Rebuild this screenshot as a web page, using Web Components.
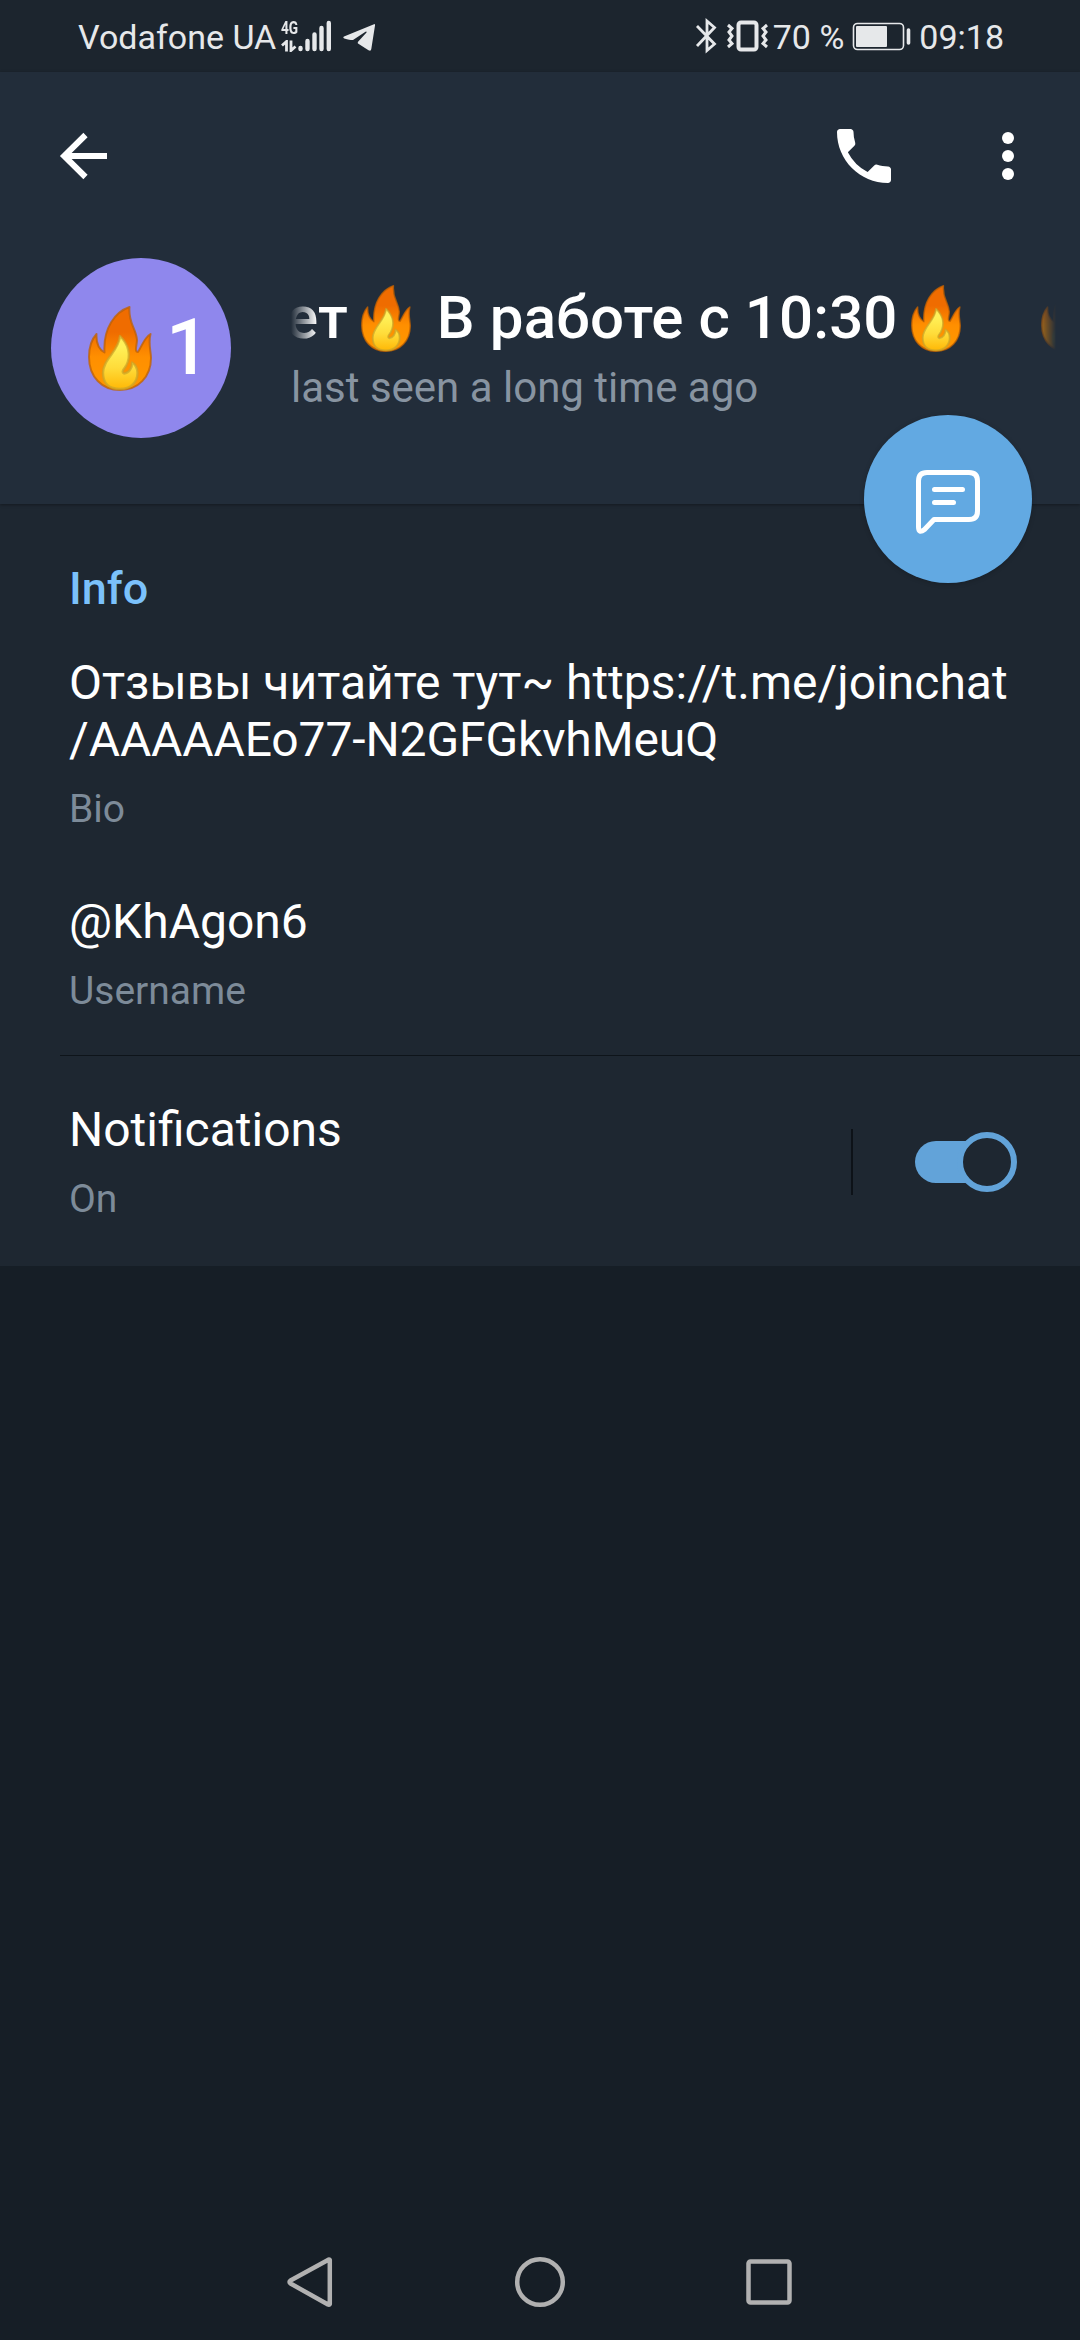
<!DOCTYPE html>
<html lang="en">
<head>
<meta charset="UTF-8">
<title>Profile</title>
<style>
  body {
    margin: 0;
    background: #161e26;
    font-family: Roboto, "Noto Sans", sans-serif;
    color: #fff;
  }
</style>
</head>
<body>
<profile-screen></profile-screen>

<script>
// Small base: every component only supplies its own template string
class BaseElement extends HTMLElement {
  constructor() {
    super();
    this.attachShadow({ mode: 'open' }).innerHTML = this.template();
  }
}

// FLAME EMOJI, the user of the element sets its width and height
class FlameEmoji extends BaseElement {
  template() {
    return `
      <style>
        :host { display: inline-block; line-height: 0; flex: none; }
        svg { display: block; width: 100%; height: 100%; }
      </style>
      <svg viewBox="0 0 64 85" preserveAspectRatio="none" role="img" aria-label="🔥">
        <defs>
          <linearGradient id="outer" x1="0" y1="0" x2="0" y2="1">
            <stop offset="0.3" stop-color="#ef6c00"/>
            <stop offset="0.6" stop-color="#ff8f00"/>
            <stop offset="1" stop-color="#ff9800"/>
          </linearGradient>
          <linearGradient id="inner" x1="0" y1="0" x2="0" y2="1">
            <stop offset="0.2" stop-color="#fff158"/>
            <stop offset="0.6" stop-color="#ffdc3a"/>
            <stop offset="1" stop-color="#ffb806"/>
          </linearGradient>
        </defs>
        <path fill="url(#outer)" stroke="#bf6000" stroke-opacity=".75" stroke-width="2" stroke-linejoin="round"
          d="M41.5 1C27 6 15 22 16.500 46.500C12 44 8 38 8.500 28C3 34 1 43 1 51C1 71 14 84 32 84C50 84 63 71 63 52C63 45 60 38 62.500 28C56 32 54 40 50 46C46 46 49 39 49 34C48 22 40 17 41.500 1Z"/>
        <path fill="url(#inner)" stroke="#c9a52a" stroke-opacity=".7" stroke-width="2.400" stroke-linejoin="round"
          d="M32 30C31 45 15 53 15 67C15 78 22 83 32 83C43 83 49.500 76 49.500 67C49.500 63 48 59 44 56.500C44.500 62 41 67 36 67.500C33 66 36 63 38 60C44 49 40 38 32 30Z"/>
      </svg>
    `;
  }
}
customElements.define('flame-emoji', FlameEmoji);

// SYSTEM STATUS BAR
class StatusBar extends BaseElement {
  template() {
    return `
      <style>
        :host {
          display: flex;
          justify-content: space-between;
          height: 72px;
          padding: 0 76px 0 78px;
          box-sizing: border-box;
          background: #1c252e;
          color: #e6e8ea;
          font-size: 34px;
          line-height: 74px;
        }
        .group { display: flex; }
        svg { display: block; flex: none; }
        .network {
          display: flex;
          flex-direction: column;
          width: 17px;
          padding-top: 19px;
          margin-left: 5px;
        }
        .generation {
          font: 700 19px/18px Roboto, sans-serif;
          transform: scaleX(.72);
          transform-origin: left;
        }
        .arrows { margin-top: 3px; }
      </style>
      <div class="group">
        <span>Vodafone UA</span>
        <div class="network">
          <span class="generation">4G</span>
          <svg class="arrows" width="17" height="12" viewBox="0 0 17 12" fill="none" stroke="currentColor" stroke-width="2.800">
            <path d="M1 5.500L5.500 1.500V11.500M10 0.500V10.500L14.500 6.500"/>
          </svg>
        </div>
        <svg width="33" height="72" viewBox="0 0 33 72" fill="none" stroke="currentColor" stroke-width="4.400" stroke-linecap="round">
          <path d="M2.500 48V49M9.500 41V49M16.500 34.500V49M23.500 28V49M30.800 23V49"/>
        </svg>
        <svg width="44" height="72" viewBox="-2 0 44 72" fill="currentColor">
          <path d="M11 36.500L41 24.200Q42.300 23.800 42 25.500L38.300 49Q38 51.500 35.500 50.200L25 43.500Q24.300 42.500 25.500 41.300L33.500 32.500Q34 31 32.500 31.700L20 40Q18.500 40.500 11.300 38.500Q9.500 37.500 11 36.500Z"/>
        </svg>
      </div>
      <div class="group">
        <svg width="28" height="72" viewBox="0 0 28 72" fill="none" stroke="currentColor" stroke-width="2.800" stroke-linejoin="miter">
          <path d="M2 26L19.500 44L12 50.500V21L19.500 27.500L2 46"/>
        </svg>
        <svg width="50" height="72" viewBox="0 0 50 72" fill="none" stroke="currentColor">
          <rect x="15.500" y="22.500" width="18" height="27" rx="2.500" stroke-width="4"/>
          <path stroke-width="3" d="M5 25L9 28.500L6 32L9 36L6 40L9 43.500L5 47M44 25L40 28.500L43 32L40 36L43 40L40 43.500L44 47"/>
        </svg>
        <span>70 %</span>
        <svg width="75" height="72" viewBox="-1 0 75 72" fill="none" stroke="currentColor">
          <rect x="8.500" y="23.500" width="50" height="26" rx="4" stroke-width="1.600"/>
          <rect x="11" y="26" width="31" height="21" rx="1" fill="currentColor" stroke="none"/>
          <path stroke-width="3.600" stroke-linecap="round" d="M63.500 30V43"/>
        </svg>
        <span>09:18</span>
      </div>
    `;
  }
}
customElements.define('status-bar', StatusBar);

// TOOLBAR: back, call, overflow menu
class ProfileToolbar extends BaseElement {
  template() {
    return `
      <style>
        :host {
          display: flex;
          align-items: center;
          height: 168px;
          padding: 0 36px 0 48px;
        }
        svg { display: block; }
        .spacer { flex: 1; }
        .call { margin-right: 72px; }
      </style>
      <svg width="72" height="72" viewBox="0 0 72 72" fill="none" stroke="#fff" stroke-width="6">
        <path d="M59 36H16M37.500 15L16.200 36L37.500 57"/>
      </svg>
      <span class="spacer"></span>
      <svg class="call" width="72" height="72" viewBox="0 0 24 24" fill="#fff">
        <path d="M20 15.500c-1.250 0-2.450-.2-3.570-.57a1.020 1.020 0 0 0-1.020.24l-2.200 2.200a15.045 15.045 0 0 1-6.590-6.590l2.200-2.210a.96.96 0 0 0 .25-1A11.360 11.360 0 0 1 8.500 4c0-.55-.45-1-1-1H4c-.55 0-1 .45-1 1 0 9.390 7.610 17 17 17 .55 0 1-.45 1-1v-3.500c0-.55-.45-1-1-1z"/>
      </svg>
      <svg width="72" height="72" viewBox="0 0 72 72" fill="#fff">
        <circle cx="36" cy="18" r="6"/><circle cx="36" cy="36" r="6"/><circle cx="36" cy="54" r="6"/>
      </svg>
    `;
  }
}
customElements.define('profile-toolbar', ProfileToolbar);

class ProfileAvatar extends BaseElement {
  template() {
    return `
      <style>
        :host {
          display: flex;
          align-items: center;
          width: 180px;
          height: 180px;
          padding-left: 37px;
          box-sizing: border-box;
          border-radius: 50%;
          background: #8f87ed;
          font-size: 77px;
          font-weight: 500;
          line-height: 90px;
        }
        flame-emoji { width: 64px; height: 85px; margin-right: 14px; }
      </style>
      <flame-emoji></flame-emoji>
      <slot></slot>
    `;
  }
}
customElements.define('profile-avatar', ProfileAvatar);

class MarqueeTitle extends BaseElement {
  template() {
    return `
      <style>
        :host {
          display: flex;
          height: 70px;
          overflow: hidden;
          white-space: pre;
          font-size: 60px;
          font-weight: 500;
          line-height: 70px;
          letter-spacing: .1px;
          -webkit-mask-image: linear-gradient(90deg, transparent, #000 26px, #000 calc(100% - 26px), transparent);
          mask-image: linear-gradient(90deg, transparent, #000 26px, #000 calc(100% - 26px), transparent);
        }
        .track { display: flex; flex: none; margin-left: -5px; }
      </style>
      <div class="track"><slot></slot></div>
    `;
  }
}
customElements.define('marquee-title', MarqueeTitle);

class ProfileHeader extends BaseElement {
  template() {
    return `
      <style>
        :host {
          display: block;
          height: 432px;
          background: #222d3a;
          box-shadow: 0 1px 3px rgba(0, 0, 0, .35);
          position: relative;
        }
        .identity { display: flex; padding: 18px 24px 0 51px; }
        .names {
          display: flex;
          flex-direction: column;
          flex: 1;
          min-width: 0;
          gap: 10px;
          padding: 25px 0 0 60px;
        }
        marquee-title flame-emoji { width: 50px; height: 67px; margin: 2px 11px 0 13px; }
        .gap { width: 56px; }
        .seen { font-size: 42px; line-height: 50px; color: #8894a1; }
      </style>
      <profile-toolbar></profile-toolbar>
      <div class="identity">
        <profile-avatar>1</profile-avatar>
        <div class="names">
          <marquee-title>
            <span>ет</span><flame-emoji></flame-emoji><span> В работе с 10:30</span><flame-emoji></flame-emoji><span class="gap"></span><flame-emoji></flame-emoji>
          </marquee-title>
          <span class="seen">last seen a long time ago</span>
        </div>
      </div>
    `;
  }
}
customElements.define('profile-header', ProfileHeader);

// FLOATING MESSAGE BUTTON
class MessageButton extends BaseElement {
  template() {
    return `
      <style>
        :host {
          display: block;
          width: 168px;
          height: 168px;
          border-radius: 50%;
          background: #62a9e2;
          box-shadow: 0 1px 5px rgba(0, 0, 0, .2);
        }
        svg { display: block; }
      </style>
      <svg width="168" height="168" viewBox="0 0 168 168" fill="none" stroke="#fff" stroke-width="5" stroke-linecap="round" stroke-linejoin="round">
        <path d="M63 57.500H105Q113.500 57.500 113.500 66V96Q113.500 104.500 105 104.500H70L60.500 114.500Q54.500 119 54.500 112V66Q54.500 57.500 63 57.500Z"/>
        <path d="M70.500 74.500H98.500M70.500 87.500H89.500"/>
      </svg>
    `;
  }
}
customElements.define('message-button', MessageButton);

// Value on top, grey caption below
class InfoRow extends BaseElement {
  template() {
    return `
      <style>
        :host {
          display: flex;
          flex-direction: column;
          gap: 18px;
          font-size: 48px;
          line-height: 57px;
        }
        .caption { font-size: 39px; line-height: 46px; color: #7d8b99; }
      </style>
      <div><slot></slot></div>
      <div class="caption"><slot name="caption"></slot></div>
    `;
  }
}
customElements.define('info-row', InfoRow);

class ToggleSwitch extends BaseElement {
  template() {
    return `
      <style>
        :host { display: block; width: 102px; height: 60px; }
        svg { display: block; }
      </style>
      <svg width="102" height="60" viewBox="0 0 102 60">
        <rect x="0" y="9" width="84" height="42" rx="21" fill="#62a3d9"/>
        <circle cx="72" cy="30" r="27" fill="#1e2731" stroke="#62a3d9" stroke-width="6"/>
      </svg>
    `;
  }
}
customElements.define('toggle-switch', ToggleSwitch);

class NavBar extends BaseElement {
  template() {
    return `
      <style>
        :host {
          display: flex;
          justify-content: center;
          align-items: center;
          gap: 157px;
          height: 116px;
        }
        svg { display: block; }
      </style>
      <svg width="72" height="72" viewBox="1 0 72 72" fill="none" stroke="#b1b1b1" stroke-width="4.500" stroke-linejoin="round">
        <path d="M54 14Q55 13 55.800 14V58Q55 59 54 58.500L16.500 37.500Q14.500 36 16.500 34.500Z"/>
      </svg>
      <svg width="72" height="72" viewBox="0 0 72 72" fill="none" stroke="#b1b1b1" stroke-width="4.500">
        <circle cx="36" cy="36" r="22.800"/>
      </svg>
      <svg width="72" height="72" viewBox="0 0 72 72" fill="none" stroke="#b1b1b1" stroke-width="4.500">
        <rect x="15.500" y="15.500" width="41" height="41" rx="2"/>
      </svg>
    `;
  }
}
customElements.define('nav-bar', NavBar);

// WHOLE SCREEN
class ProfileScreen extends BaseElement {
  template() {
    return `
      <style>
        :host {
          display: flex;
          flex-direction: column;
          width: 1080px;
          height: 2340px;
          position: relative;
          overflow: hidden;
          background: #161e26;
        }
        .panel { background: #1e2731; height: 762px; }
        .info { padding: 58px 60px 41px 69px; }
        h2 {
          margin: 0 0 39px;
          font-size: 45px;
          font-weight: 500;
          line-height: 53px;
          color: #7bc1fb;
        }
        .info info-row + info-row { margin-top: 61px; }
        .link-end { letter-spacing: -.12px; }
        .notifications {
          display: flex;
          align-items: center;
          margin-left: 60px;
          padding: 45px 63px 44px 9px;
          border-top: 1px solid #0e141a;
        }
        .notifications info-row { flex: 1; }
        .separator { width: 2px; height: 66px; margin-right: 62px; background: #0d1218; }
        .rest { flex: 1; }
        /* floats over the edge between header and panel */
        message-button { position: absolute; top: 415px; right: 48px; }
      </style>
      <status-bar></status-bar>
      <profile-header></profile-header>
      <div class="panel">
        <div class="info">
          <h2>Info</h2>
          <info-row>Отзывы читайте тут~ https://t.me/joinchat<br><span class="link-end">/AAAAAEo77-N2GFGkvhMeuQ</span><span slot="caption">Bio</span></info-row>
          <info-row>@KhAgon6<span slot="caption">Username</span></info-row>
        </div>
        <div class="notifications">
          <info-row>Notifications<span slot="caption">On</span></info-row>
          <span class="separator"></span>
          <toggle-switch></toggle-switch>
        </div>
      </div>
      <div class="rest"></div>
      <nav-bar></nav-bar>
      <message-button></message-button>
    `;
  }
}
customElements.define('profile-screen', ProfileScreen);
</script>
</body>
</html>
